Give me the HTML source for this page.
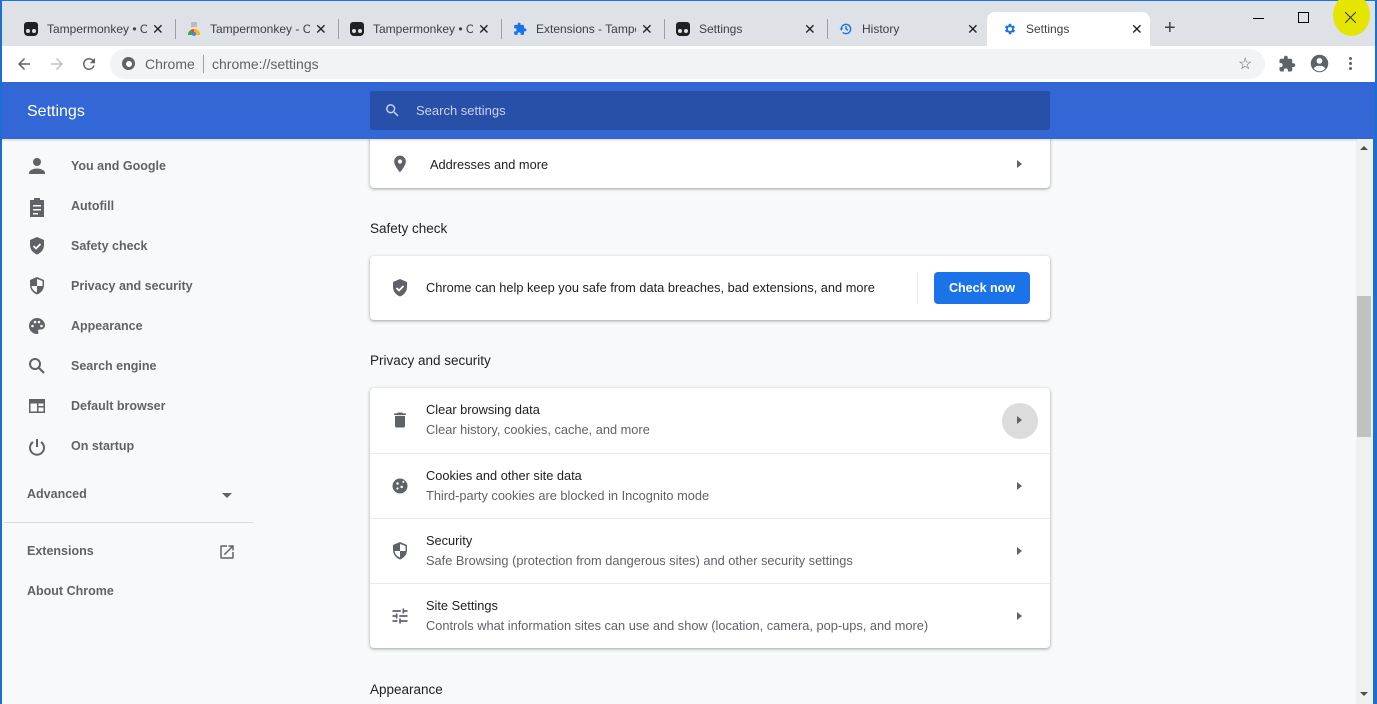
<!DOCTYPE html>
<html><head><meta charset="utf-8"><style>
*{box-sizing:border-box;margin:0;padding:0}
body{width:1377px;height:704px;overflow:hidden;position:relative;background:#f8f9fa;font-family:"Liberation Sans",Arial,sans-serif;color:#202124}
.a{position:absolute}
.tabs{left:0;top:0;width:1377px;height:46px;background:#dee1e6;border-top:1px solid #1a73e8;border-left:2px solid #1a6fd1;border-right:2px solid #1a6fd1}
.tab{top:12px;height:34px;width:163px;font-size:12px;color:#3c4043;line-height:34px}
.tab .ic{position:absolute;left:16px;top:10px;width:14px;height:14px}
.tab .t{position:absolute;left:39px;top:0;width:100px;overflow:hidden;white-space:nowrap}
.tab .x{position:absolute;left:144px;top:0;font-size:14px;color:#202124}
.sep{top:19px;width:1px;height:20px;background:#9aa0a6}
.tm{background:#202124;border-radius:3px 3px 4px 4px}
.tm:after{content:"";position:absolute;left:2px;top:7px;width:4px;height:4px;border-radius:50%;background:#dee1e6;box-shadow:6px 0 0 #dee1e6}
.toolbar{left:0;top:46px;width:1377px;height:36px;background:#fff;border-left:2px solid #1a6fd1;border-right:2px solid #1a6fd1}
.omni{left:110px;top:49px;width:1155px;height:30px;background:#f1f3f4;border-radius:15px}
.hdr{left:0;top:82px;width:1377px;height:57px;background:#3367d6;border-left:2px solid #1a6fd1;border-right:2px solid #1a6fd1;z-index:5}
.srch{left:370px;top:91px;width:680px;height:39px;background:#2850a8;border-radius:2px;z-index:6}
.side{font-size:12.5px;color:#5f6368;font-weight:bold}
.side div{position:absolute;left:71px;white-space:nowrap}
.card{background:#fff;border-radius:4px;box-shadow:0 1px 2px rgba(60,64,67,.3),0 1px 3px 1px rgba(60,64,67,.15)}
.h{font-size:13.5px;color:#202124}
.row{position:absolute;left:0;width:680px;height:65px;border-top:1px solid #e8eaed}
.row .t1{position:absolute;left:56px;top:14px;font-size:12.8px;color:#202124}
.row .t2{position:absolute;left:56px;top:34px;font-size:12.8px;color:#5f6368}
.row svg.i{position:absolute;left:20px;top:22px}
.arr{position:absolute;left:647px;top:28px;width:0;height:0;border-top:4px solid transparent;border-bottom:4px solid transparent;border-left:5px solid #5f6368}
</style></head><body>
<div class="a tabs"></div>
<div class="a tab" style="left:8px"><div class="ic tm"></div><span class="t">Tampermonkey • Chrome</span><span class="x">✕</span></div>
<div class="a sep" style="left:175px"></div>
<div class="a tab" style="left:171px"><svg class="ic" viewBox="0 0 14 14"><rect x="4" y="0" width="6" height="5" fill="#bbb"/><path d="M1 13A6 6 0 0 1 13 13Z" fill="#ea4335"/><path d="M7 7A6 6 0 0 1 13 13H7Z" fill="#fbbc05"/><path d="M1 13A6 6 0 0 1 4 8L7 13Z" fill="#34a853"/><circle cx="7" cy="12" r="2" fill="#4285f4"/></svg><span class="t">Tampermonkey - Chrome</span><span class="x">✕</span></div>
<div class="a sep" style="left:338px"></div>
<div class="a tab" style="left:334px"><div class="ic tm"></div><span class="t">Tampermonkey • Chrome</span><span class="x">✕</span></div>
<div class="a sep" style="left:501px"></div>
<div class="a tab" style="left:497px"><svg class="ic" viewBox="0 0 24 24"><path fill="#1a73e8" d="M20.5 11H19V7c0-1.1-.9-2-2-2h-4V3.5a2.5 2.5 0 0 0-5 0V5H4c-1.1 0-2 .9-2 2v3.8h1.5a2.7 2.7 0 0 1 0 5.4H2V20c0 1.1.9 2 2 2h3.8v-1.5a2.7 2.7 0 0 1 5.4 0V22H17c1.1 0 2-.9 2-2v-4h1.5a2.5 2.5 0 0 0 0-5z"/></svg><span class="t">Extensions - Tampermonkey</span><span class="x">✕</span></div>
<div class="a sep" style="left:664px"></div>
<div class="a tab" style="left:660px"><div class="ic tm"></div><span class="t">Settings</span><span class="x">✕</span></div>
<div class="a sep" style="left:827px"></div>
<div class="a tab" style="left:823px"><svg class="ic" viewBox="0 0 24 24"><path fill="none" stroke="#1a73e8" stroke-width="2.4" d="M4 12a8 8 0 1 1 2.4 5.7M12 7v5l3.5 2"/><path fill="#1a73e8" d="M1 11h6l-3 4z"/></svg><span class="t">History</span><span class="x">✕</span></div>
<div class="a tab" style="left:987px;width:163px;background:#fff;border-radius:8px 8px 0 0"><svg class="ic" viewBox="0 0 24 24"><path fill="#1a73e8" d="M19.4 13a7.5 7.5 0 0 0 0-2l2.1-1.6-2-3.5-2.5 1a7 7 0 0 0-1.7-1L15 3h-4l-.4 2.7a7 7 0 0 0-1.7 1l-2.5-1-2 3.5L6.5 11a7.5 7.5 0 0 0 0 2l-2.1 1.6 2 3.5 2.5-1a7 7 0 0 0 1.7 1L11 21h4l.4-2.7a7 7 0 0 0 1.7-1l2.5 1 2-3.5zM13 15.5a3.5 3.5 0 1 1 0-7 3.5 3.5 0 0 1 0 7z" transform="translate(-1 0)"/></svg><span class="t">Settings</span><span class="x">✕</span></div>
<div class="a" style="left:1164px;top:17px;font-size:20px;color:#3c4043">+</div>
<div class="a" style="left:1253px;top:18px;width:11px;height:1px;background:#000"></div>
<div class="a" style="left:1298px;top:12px;width:11px;height:11px;border:1px solid #000"></div>
<div class="a" style="left:1333px;top:-6px;width:37px;height:42px;background:#e5e500;border-radius:50%"></div>
<svg class="a" style="left:1345px;top:12px" width="11" height="11" viewBox="0 0 11 11"><path d="M0 0L11 11M11 0L0 11" stroke="#333" stroke-width="1"/></svg>
<div class="a toolbar"></div>
<svg class="a" style="left:15px;top:55px" width="18" height="18" viewBox="0 0 24 24"><path fill="#5f6368" d="M20 11H7.8l5.6-5.6L12 4l-8 8 8 8 1.4-1.4L7.8 13H20z"/></svg>
<svg class="a" style="left:48px;top:55px" width="18" height="18" viewBox="0 0 24 24"><path fill="#bdc1c6" d="M4 11h12.2l-5.6-5.6L12 4l8 8-8 8-1.4-1.4 5.6-5.6H4z"/></svg>
<svg class="a" style="left:80px;top:55px" width="18" height="18" viewBox="0 0 24 24"><path fill="#5f6368" d="M17.65 6.35A7.96 7.96 0 0 0 12 4a8 8 0 1 0 7.73 10h-2.08A6 6 0 1 1 12 6c1.66 0 3.14.69 4.22 1.78L13 11h7V4z"/></svg>
<div class="a omni"></div>
<div class="a" style="left:122px;top:57px;width:13px;height:13px;border-radius:50%;background:#5f6368"><div style="position:absolute;left:3.5px;top:3.5px;width:6px;height:6px;border-radius:50%;background:#fff"></div></div>
<div class="a" style="left:145px;top:56px;font-size:14px;color:#5f6368">Chrome</div>
<div class="a" style="left:203px;top:55px;width:1px;height:18px;background:#9aa0a6"></div>
<div class="a" style="left:212px;top:56px;font-size:14px;color:#5f6368">chrome://settings</div>
<div class="a" style="left:1238px;top:54px;font-size:16px;color:#5f6368">☆</div>
<svg class="a" style="left:1278px;top:55px" width="18" height="18" viewBox="0 0 24 24"><path fill="#5f6368" d="M20.5 11H19V7c0-1.1-.9-2-2-2h-4V3.5a2.5 2.5 0 0 0-5 0V5H4c-1.1 0-2 .9-2 2v3.8h1.5a2.7 2.7 0 0 1 0 5.4H2V20c0 1.1.9 2 2 2h3.8v-1.5a2.7 2.7 0 0 1 5.4 0V22H17c1.1 0 2-.9 2-2v-4h1.5a2.5 2.5 0 0 0 0-5z"/></svg>
<svg class="a" style="left:1309px;top:53px" width="21" height="21" viewBox="0 0 24 24"><circle cx="12" cy="12" r="10" fill="#5f6368"/><circle cx="12" cy="9" r="3.3" fill="#fff"/><path fill="#fff" d="M5.5 17.5c1.5-2.3 4-3 6.5-3s5 .7 6.5 3A8 8 0 0 1 5.5 17.5z"/></svg>
<div class="a" style="left:1349px;top:57px;width:3px;height:3px;background:#5f6368;border-radius:50%;box-shadow:0 5px 0 #5f6368,0 10px 0 #5f6368"></div>
<div class="a hdr"></div>
<div class="a" style="left:27px;top:103px;font-size:16px;color:#fff;z-index:7">Settings</div>
<div class="a srch"></div>
<svg class="a" style="left:384px;top:102px;z-index:7" width="17" height="17" viewBox="0 0 24 24"><path fill="#c6d3ef" d="M15.5 14h-.8l-.3-.3A6.5 6.5 0 1 0 9.5 16c1.6 0 3.1-.6 4.2-1.6l.3.3v.8l5 5 1.5-1.5zm-6 0a4.5 4.5 0 1 1 0-9 4.5 4.5 0 0 1 0 9z"/></svg>
<div class="a" style="left:416px;top:103px;font-size:13px;color:#c6d3ef;z-index:7">Search settings</div>
<div class="a" style="left:0;top:139px;width:2px;height:565px;background:#1a6fd1"></div>
<div class="a" style="left:1373px;top:139px;width:4px;height:565px;background:#1a6fd1"></div>
<div class="a side" style="left:0;top:0">
<div style="top:159px">You and Google</div><div style="top:199px">Autofill</div><div style="top:239px">Safety check</div><div style="top:279px">Privacy and security</div><div style="top:319px">Appearance</div><div style="top:359px">Search engine</div><div style="top:399px">Default browser</div><div style="top:439px">On startup</div>
<div style="top:487px;left:27px">Advanced</div><div style="top:544px;left:27px">Extensions</div><div style="top:584px;left:27px">About Chrome</div>
</div>
<svg class="a" style="left:27px;top:156px" width="20" height="320" viewBox="0 0 20 320" fill="#5f6368">
<circle cx="10" cy="6" r="4"/><path d="M2 17c0-3 5-4.5 8-4.5s8 1.5 8 4.5v1H2z"/>
<path d="M3 44h14v17H3z M7 42h6v3H7z"/><path fill="#f8f9fa" d="M6 49h8v1.5H6zM6 53h8v1.5H6zM6 57h5v1.5H6z"/>
<path d="M10 81l7 3v5c0 4.5-3 8-7 9.5-4-1.5-7-5-7-9.5v-5z"/><path fill="none" stroke="#f8f9fa" stroke-width="1.8" d="M6.5 90l2.5 2.5 4.5-4.5"/>
<path d="M10 121l7 3v5c0 4.5-3 8-7 9.5-4-1.5-7-5-7-9.5v-5z"/><path fill="#f8f9fa" d="M10 123v7h5.5v-1V125zM4.5 130H10v6.5c-2.5-1-5-3-5.5-6.5z"/>
<path d="M10 162a8 8 0 0 0 0 16c1 0 1.5-.7 1.5-1.4 0-.8-.5-1-.5-1.7 0-.8.6-1.4 1.4-1.4H14a4 4 0 0 0 4-4c0-4-3.6-7.5-8-7.5z"/><circle cx="5.5" cy="170" r="1.3" fill="#f8f9fa"/><circle cx="8" cy="166" r="1.3" fill="#f8f9fa"/><circle cx="12" cy="166" r="1.3" fill="#f8f9fa"/><circle cx="14.5" cy="170" r="1.3" fill="#f8f9fa"/>
<circle cx="8" cy="208" r="5" fill="none" stroke="#5f6368" stroke-width="2"/><path d="M11 211l6 6" stroke="#5f6368" stroke-width="2.2"/>
<path d="M2 243h16v14H2z"/><path fill="#f8f9fa" d="M3.5 247.5h13v8h-13z"/><path d="M10 247.5h1.5v8H10zM10 250h6.5v1.5H10z"/>
<path d="M10 283v8" stroke="#5f6368" stroke-width="2"/><path d="M6 286a7 7 0 1 0 8 0" fill="none" stroke="#5f6368" stroke-width="2"/>
</svg>
<div class="a" style="left:222px;top:493px;border-left:5px solid transparent;border-right:5px solid transparent;border-top:5px solid #5f6368"></div>
<div class="a" style="left:4px;top:522px;width:249px;height:1px;background:#dadce0"></div>
<svg class="a" style="left:218px;top:543px" width="18" height="18" viewBox="0 0 24 24"><path fill="#5f6368" d="M19 19H5V5h7V3H5a2 2 0 0 0-2 2v14a2 2 0 0 0 2 2h14a2 2 0 0 0 2-2v-7h-2zM14 3v2h3.6l-9.8 9.8 1.4 1.4L19 6.4V10h2V3z"/></svg>

<div class="a card" style="left:370px;top:130px;width:680px;height:58px"><svg class="a" style="left:20px;top:24px" width="20" height="20" viewBox="0 0 24 24"><path fill="#5f6368" d="M12 2a7 7 0 0 0-7 7c0 5.2 7 13 7 13s7-7.8 7-13a7 7 0 0 0-7-7zm0 9.5a2.5 2.5 0 1 1 0-5 2.5 2.5 0 0 1 0 5z"/></svg><div class="a" style="left:60px;top:27px;font-size:12.8px">Addresses and more</div><div class="arr" style="top:30px"></div></div>
<div class="a" style="left:0;top:139px;width:1357px;height:3px;background:linear-gradient(rgba(0,0,0,.12),rgba(0,0,0,0));z-index:4"></div>
<div class="a h" style="left:370px;top:221px">Safety check</div>
<div class="a card" style="left:370px;top:256px;width:680px;height:64px">
<svg class="a" style="left:20px;top:22px" width="20" height="20" viewBox="0 0 20 20"><path fill="#5f6368" d="M10 1l7 3v5c0 4.5-3 8-7 9.5-4-1.5-7-5-7-9.5v-5z"/><path fill="none" stroke="#fff" stroke-width="1.8" d="M6.5 10l2.5 2.5 4.5-4.5"/></svg>
<div class="a" style="left:56px;top:24px;font-size:12.8px">Chrome can help keep you safe from data breaches, bad extensions, and more</div>
<div class="a" style="left:547px;top:16px;width:1px;height:32px;background:#e8eaed"></div>
<div class="a" style="left:564px;top:16px;width:96px;height:32px;background:#1a73e8;border-radius:4px;color:#fff;font-size:12.5px;font-weight:bold;text-align:center;line-height:32px">Check now</div></div>
<div class="a h" style="left:370px;top:353px">Privacy and security</div>
<div class="a card" style="left:370px;top:388px;width:680px;height:260px">
<div class="row" style="top:0;border-top:none"><svg class="i" width="20" height="20" viewBox="0 0 24 24"><path fill="#5f6368" d="M6 19a2 2 0 0 0 2 2h8a2 2 0 0 0 2-2V7H6zM19 4h-3.5l-1-1h-5l-1 1H5v2h14z"/></svg><div class="t1">Clear browsing data</div><div class="t2">Clear history, cookies, cache, and more</div><div class="a" style="left:632px;top:15px;width:36px;height:36px;border-radius:50%;background:#dcdcdc"></div><div class="arr"></div></div>
<div class="row" style="top:65px"><svg class="i" width="20" height="20" viewBox="0 0 24 24"><circle cx="12" cy="12" r="9" fill="#5f6368"/><circle cx="9" cy="9" r="1.5" fill="#fff"/><circle cx="14" cy="13" r="1.5" fill="#fff"/><circle cx="9" cy="15" r="1.3" fill="#fff"/><circle cx="16" cy="7" r="1.3" fill="#fff"/></svg><div class="t1">Cookies and other site data</div><div class="t2">Third-party cookies are blocked in Incognito mode</div><div class="arr"></div></div>
<div class="row" style="top:130px"><svg class="i" width="20" height="20" viewBox="0 0 20 20"><path fill="#5f6368" d="M10 1l7 3v5c0 4.5-3 8-7 9.5-4-1.5-7-5-7-9.5v-5z"/><path fill="#fff" d="M10 3v7h5.5v-1V5zM4.5 10H10v6.5c-2.5-1-5-3-5.5-6.5z"/></svg><div class="t1">Security</div><div class="t2">Safe Browsing (protection from dangerous sites) and other security settings</div><div class="arr"></div></div>
<div class="row" style="top:195px"><svg class="i" width="20" height="20" viewBox="0 0 24 24"><path fill="#5f6368" d="M3 17v2h6v-2zM3 5v2h10V5zm10 16v-2h8v-2h-8v-2h-2v6zM7 9v2H3v2h4v2h2V9zm14 4v-2H11v2zm-6-4h2V7h4V5h-4V3h-2z"/></svg><div class="t1">Site Settings</div><div class="t2">Controls what information sites can use and show (location, camera, pop-ups, and more)</div><div class="arr"></div></div>
</div>
<div class="a h" style="left:370px;top:682px">Appearance</div>
<div class="a" style="left:1356px;top:139px;width:17px;height:565px;background:#f0f0f0"></div>
<div class="a" style="left:1357px;top:296px;width:14px;height:141px;background:#c1c1c1"></div>
<div class="a" style="left:1360px;top:146px;border-left:4px solid transparent;border-right:4px solid transparent;border-bottom:4px solid #505050"></div>
<div class="a" style="left:1360px;top:692px;border-left:4px solid transparent;border-right:4px solid transparent;border-top:4px solid #505050"></div>
</body></html>
